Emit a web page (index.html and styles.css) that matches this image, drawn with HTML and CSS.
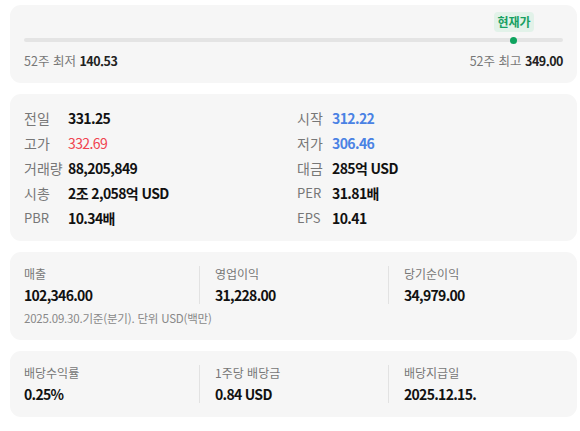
FILE: index.html
```html
<!DOCTYPE html>
<html lang="ko">
<head>
<meta charset="utf-8">
<link rel="stylesheet" href="styles.css">
</head>
<body>
<div class="page">
  <section class="card range-card">
    <div class="range">
      <div class="track">
        <div class="marker" style="left: 90.9%">
          <span class="badge">현재가</span>
          <span class="dot"></span>
        </div>
      </div>
    </div>
    <div class="range-labels">
      <span><span class="muted">52주 최저</span> <b>140.53</b></span>
      <span><span class="muted">52주 최고</span> <b>349.00</b></span>
    </div>
  </section>

  <section class="card quote">
    <span class="k">전일</span><span class="v">331.25</span>
    <span class="k">시작</span><span class="v blue">312.22</span>
    <span class="k">고가</span><span class="v red">332.69</span>
    <span class="k">저가</span><span class="v blue">306.46</span>
    <span class="k">거래량</span><span class="v">88,205,849</span>
    <span class="k">대금</span><span class="v">285억 USD</span>
    <span class="k">시총</span><span class="v">2조 2,058억 USD</span>
    <span class="k lat">PER</span><span class="v">31.81배</span>
    <span class="k lat">PBR</span><span class="v">10.34배</span>
    <span class="k lat">EPS</span><span class="v">10.41</span>
  </section>

  <section class="card stats">
    <div class="cols">
      <div class="col"><div class="lbl">매출</div><div class="val">102,346.00</div></div>
      <div class="col"><div class="lbl">영업이익</div><div class="val">31,228.00</div></div>
      <div class="col"><div class="lbl">당기순이익</div><div class="val">34,979.00</div></div>
    </div>
    <div class="note">2025.09.30.기준(분기). 단위 USD(백만)</div>
  </section>

  <section class="card stats">
    <div class="cols">
      <div class="col"><div class="lbl">배당수익률</div><div class="val">0.25%</div></div>
      <div class="col"><div class="lbl">1주당 배당금</div><div class="val">0.84 USD</div></div>
      <div class="col"><div class="lbl">배당지급일</div><div class="val">2025.12.15.</div></div>
    </div>
  </section>
</div>
</body>
</html>
```
FILE: styles.css
```css
* { box-sizing: border-box; }
html, body { margin: 0; padding: 0; background: #fff; }
body {
  font-family: "Noto Sans CJK KR", "Noto Sans", sans-serif;
  color: #111;
}
.page {
  padding: 5px 3px 0 10px;
  display: flex;
  flex-direction: column;
  gap: 11px;
}
.card {
  background: #f6f6f6;
  border-radius: 11px;
}
.range-card { padding: 33px 14px 13px; height: 78px; }
.track {
  position: relative;
  height: 4px;
  background: #e4e4e4;
  border-radius: 2px;
}
.marker {
  position: absolute;
  top: 0;
  width: 0;
}
.dot {
  position: absolute;
  left: -3.5px;
  top: -1.5px;
  width: 7px;
  height: 7px;
  border-radius: 50%;
  background: #0ea35e;
}
.badge {
  position: absolute;
  left: -20px;
  top: -26px;
  width: 40px;
  height: 20px;
  line-height: 20px;
  text-align: center;
  background: #e2f2e9;
  color: #16a062;
  font-size: 12px;
  font-weight: 700;
  border-radius: 4px;
}
.range-labels {
  display: flex;
  justify-content: space-between;
  margin-top: 10px;
  font-size: 12.5px;
  line-height: 17px;
}
.range-labels b { font-weight: 700; color: #222; letter-spacing: -0.5px; }
.muted { color: #777; }

.quote {
  display: grid;
  grid-template-columns: 44px 229px 35px 1fr;
  grid-auto-rows: 25px;
  padding: 11px 14px 11px;
  align-items: center;
  font-size: 14px;
  height: 147px;
}
.k { color: #777; }
.k.lat { font-size: 13px; }
.v { font-weight: 700; color: #111; letter-spacing: -0.6px; }
.red { color: #f0434f; font-weight: 400; }
.blue { color: #4a82e4; }

.stats { padding: 14px 0 14px; }
.cols {
  display: grid;
  grid-template-columns: 1fr 1fr 1fr;
}
.col {
  padding-left: 14px;
  display: flex;
  flex-direction: column;
  gap: 4px;
}
.col + .col {
  border-left: 1px solid #e2e2e2;
  padding-left: 15px;
}
.lbl { font-size: 12px; line-height: 16px; color: #777; }
.val { font-size: 14px; line-height: 18px; font-weight: 700; color: #111; letter-spacing: -0.7px; }
.note {
  padding-left: 14px;
  margin-top: 6px;
  font-size: 11.5px;
  line-height: 16px;
  color: #888;
  letter-spacing: -0.2px;
}
```
